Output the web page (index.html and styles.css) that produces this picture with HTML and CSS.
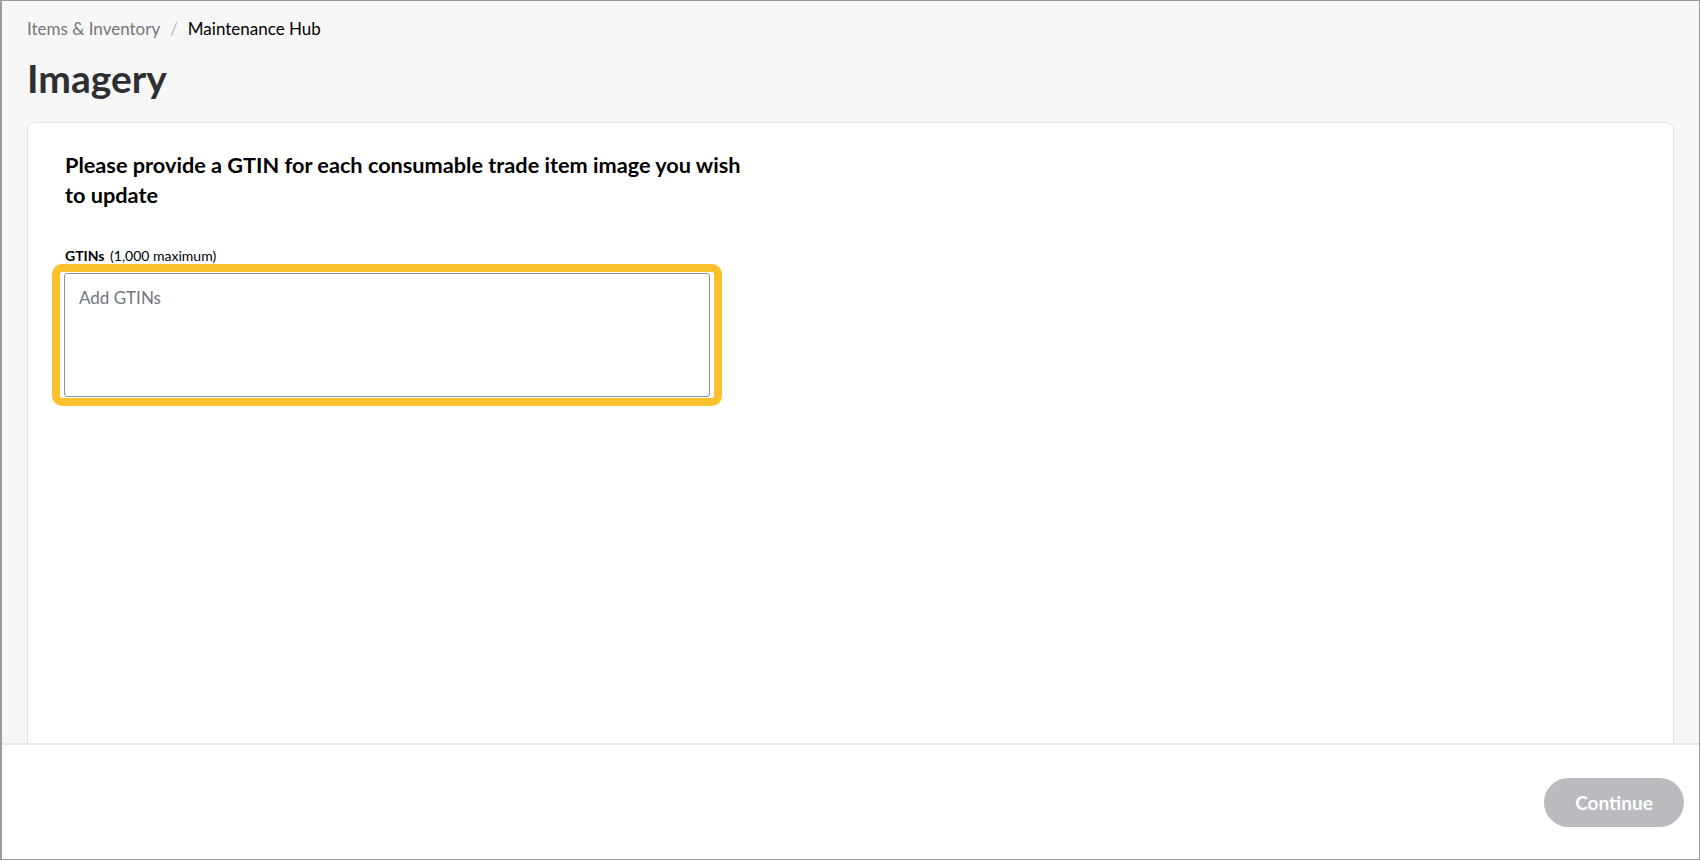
FILE: index.html
```html
<!DOCTYPE html>
<html lang="en">
<head>
    <meta charset="UTF-8">
    <meta name="viewport" content="width=device-width, initial-scale=1.0">
    <title>Imagery - Maintenance Hub</title>
    <link rel="stylesheet" href="styles.css">
</head>
<body>
    <div class="frame">
        <div class="main">
            <div class="breadcrumb">
                <span class="crumb">Items &amp; Inventory</span>
                <span class="sep">/</span>
                <span class="crumb current">Maintenance Hub</span>
            </div>
            <h1>Imagery</h1>
            <div class="card">
                <h2>Please provide a GTIN for each consumable trade item image you wish to update</h2>
                <label class="label" for="gtins"><b>GTINs</b> (1,000 maximum)</label>
                <div class="highlight">
                    <textarea id="gtins" placeholder="Add GTINs"></textarea>
                </div>
            </div>
        </div>
        <div class="footer">
            <button class="continue" disabled>Continue</button>
        </div>
    </div>
</body>
</html>
```

FILE: styles.css
```css
body {
    margin: 0;
    font-family: Lato, "Open Sans", Arial, sans-serif;
    color: #2e2f32;
}
.frame {
    height: 860px;
    box-sizing: border-box;
    border: 1px solid #9c9c9c;
    border-left-width: 2px;
    background-color: #f7f7f7;
    display: flex;
    flex-direction: column;
}
.main {
    flex: 1;
    display: flex;
    flex-direction: column;
    overflow: hidden;
    padding: 18px 25px 0 25px;
}
.breadcrumb {
    font-size: 17px;
    line-height: 20px;
    display: flex;
    gap: 10px;
}
.crumb {
    color: #74767c;
}
.sep {
    color: #b8b9bc;
}
.crumb.current {
    color: #000;
}
h1 {
    margin: 16px 0 0 0;
    font-size: 39px;
    line-height: 46px;
    font-weight: 700;
    color: #2e2f32;
}
.card {
    flex: 1;
    margin-top: 21px;
    margin-bottom: -12px;
    background-color: white;
    border: 1px solid #e0e1e3;
    border-radius: 8px;
    padding: 27px 37px 20px 37px;
}
h2 {
    margin: 0;
    width: 700px;
    font-size: 21.7px;
    line-height: 30px;
    font-weight: 700;
    color: #000;
}
.label {
    display: block;
    margin-top: 38px;
    font-size: 14px;
    line-height: 16px;
    color: #000;
}
.label b {
    margin-right: 2px;
}
.highlight {
    margin-top: 0;
    margin-left: -13px;
    width: 646px;
    padding: 1px 4px;
    border: 8px solid #fbc12d;
    border-radius: 10px;
}
textarea {
    display: block;
    box-sizing: border-box;
    width: 646px;
    height: 124px;
    border: 1px solid #909196;
    border-radius: 3px;
    padding: 13px 14px;
    font-family: Lato, "Open Sans", Arial, sans-serif;
    font-size: 17px;
    resize: none;
    background: white;
}
textarea::placeholder {
    color: #74767c;
}
.footer {
    height: 114px;
    flex-shrink: 0;
    background-color: white;
    border-top: 2px solid #e8e8e8;
    display: flex;
    justify-content: flex-end;
    align-items: center;
    padding-right: 15px;
}
.continue {
    width: 140px;
    height: 49px;
    border: none;
    border-radius: 25px;
    background-color: #babbbe;
    color: white;
    font-family: Lato, "Open Sans", Arial, sans-serif;
    font-size: 19px;
    font-weight: 700;
}
```
